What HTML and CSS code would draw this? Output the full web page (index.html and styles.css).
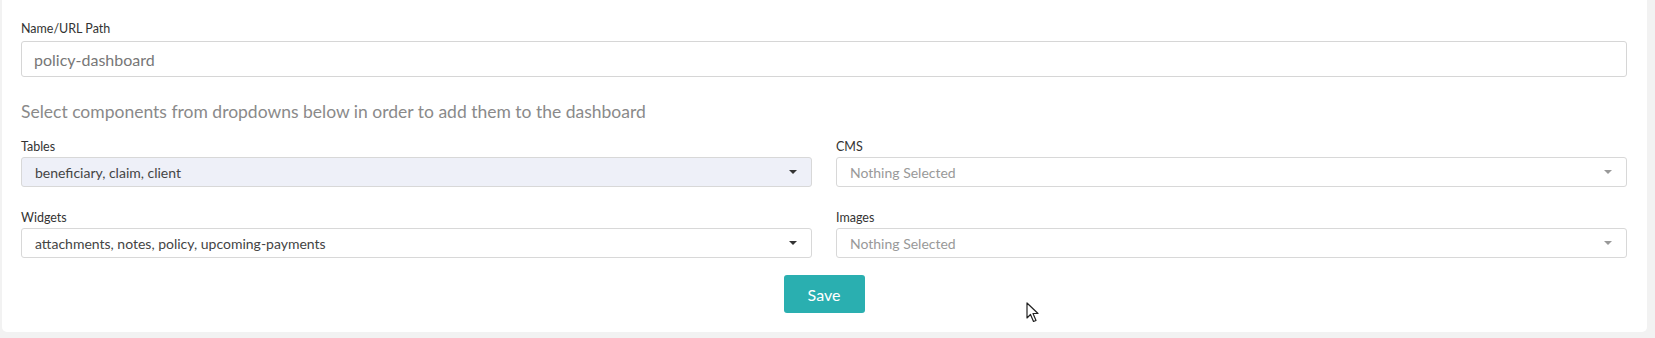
FILE: index.html
```html
<!DOCTYPE html>
<html lang="en">

<head>
    <meta charset="UTF-8">
    <meta name="viewport" content="width=device-width, initial-scale=1.0">
    <title>Dashboard</title>
    <link rel="stylesheet" href="styles.css">
</head>

<body>
    <div class="card">
        <form class="dash-form">
            <label class="fld-label">Name/URL Path</label>
            <input class="text-input" type="text" value="policy-dashboard">

            <h4 class="hint">Select components from dropdowns below in order to add them to the dashboard</h4>

            <div class="pick-grid">
                <div class="pick">
                    <label class="fld-label">Tables</label>
                    <div class="select active">
                        <span>beneficiary, claim, client</span>
                        <span class="caret"></span>
                    </div>
                </div>
                <div class="pick">
                    <label class="fld-label">CMS</label>
                    <div class="select empty">
                        <span>Nothing Selected</span>
                        <span class="caret"></span>
                    </div>
                </div>
                <div class="pick">
                    <label class="fld-label">Widgets</label>
                    <div class="select">
                        <span>attachments, notes, policy, upcoming-payments</span>
                        <span class="caret"></span>
                    </div>
                </div>
                <div class="pick">
                    <label class="fld-label">Images</label>
                    <div class="select empty">
                        <span>Nothing Selected</span>
                        <span class="caret"></span>
                    </div>
                </div>
            </div>

            <div class="actions">
                <button class="save-btn" type="button">Save</button>
            </div>
        </form>

        <svg class="cursor" width="14" height="21" viewBox="0 0 14 21">
            <path d="M1 1 L1 16 L4.5 12.5 L7.5 19.5 L10 18.5 L7 11.5 L12 11.5 Z" fill="#fff" stroke="#222" stroke-width="1.2" stroke-linejoin="round"/>
        </svg>
    </div>
</body>

</html>
```

FILE: styles.css
```css
body {
    margin: 0;
    background-color: #f2f2f2;
    font-family: Lato, "Open Sans", sans-serif;
}

.card {
    position: relative;
    margin: 0 8px 6px 2px;
    padding: 20px 20px 19px 19px;
    background-color: #fff;
    border-radius: 0 0 5px 5px;
}

.dash-form {
    display: flex;
    flex-direction: column;
}

.fld-label {
    display: block;
    font-size: 12.5px;
    line-height: 18px;
    color: #333;
    margin-bottom: 3px;
}

.pick .fld-label {
    margin-bottom: 1px;
}

.text-input {
    height: 36px;
    box-sizing: border-box;
    padding: 0 12px;
    border: 1px solid #d6d6d6;
    border-radius: 3px;
    font-family: Lato, sans-serif;
    font-size: 16px;
    color: #777;
    margin: 0;
}

.hint {
    margin: 23px 0 14px 0;
    font-size: 17.5px;
    line-height: 24px;
    font-weight: normal;
    color: #8a8a8a;
}

.pick-grid {
    display: grid;
    grid-template-columns: 1fr 1fr;
    column-gap: 24px;
    row-gap: 22px;
}

.select {
    height: 30px;
    box-sizing: border-box;
    display: flex;
    align-items: center;
    justify-content: space-between;
    padding: 0 14px 0 13px;
    border: 1px solid #d8d8d8;
    border-radius: 3px;
    font-size: 14px;
    color: #444;
}

.select.active {
    background-color: #eef0f8;
}

.select.empty {
    color: #999;
}

.caret {
    width: 0;
    height: 0;
    border-left: 4px solid transparent;
    border-right: 4px solid transparent;
    border-top: 4px solid #333;
}

.select.empty .caret {
    border-top-color: #999;
}

.actions {
    display: flex;
    justify-content: center;
    margin-top: 17px;
}

.save-btn {
    width: 81px;
    height: 38px;
    border: 0;
    border-radius: 3px;
    background-color: #2aafb0;
    color: #fff;
    font-family: Lato, sans-serif;
    font-size: 16px;
    cursor: pointer;
}

.cursor {
    position: absolute;
    left: 1024px;
    top: 302px;
}
```
